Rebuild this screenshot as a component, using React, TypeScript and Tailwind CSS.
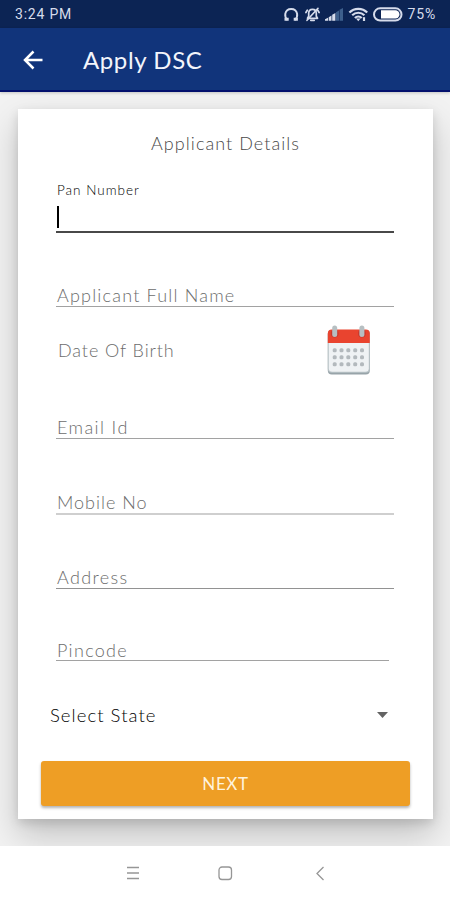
import React from 'react';

interface Field {
    id: number;
    label: string;
    row: string; // Height of the row, the underline sits at its bottom
    text: string;
}

const NAME_FIELD: Field = { id: 1, label: "Applicant Full Name", row: "h-[74px] w-[338px] border-b border-[#a2a2a2]", text: "leading-[21px] tracking-[1.2px]" };

const FIELDS: Field[] = [
    { id: 2, label: "Email Id", row: "h-[61px] w-[338px] border-b border-[#a2a2a2]", text: "leading-[21px] tracking-[1.4px]" },
    { id: 3, label: "Mobile No", row: "h-[76px] w-[338px] border-b-2 border-[#cfcfcf]", text: "leading-[21px] tracking-[1px]" },
    { id: 4, label: "Address", row: "h-[74px] w-[338px] border-b border-[#929292]", text: "leading-[21px] tracking-[1.35px]" },
    { id: 5, label: "Pincode", row: "h-[72px] w-[333px] border-b border-[#a2a2a2]", text: "leading-[19px] tracking-[1.3px]" }
];

const FormField: React.FC<{ field: Field }> = ({ field }) => (
    <div className={`ml-[38px] flex shrink-0 items-end pl-px ${field.row}`}>
        <span className={`text-[18px] font-light whitespace-nowrap text-[#6c6c6c] ${field.text}`}>
            {field.label}
        </span>
    </div>
);

const StatusIcons: React.FC = () => (
    <svg width="122" height="20" viewBox="0 0 122 20" fill="none" className="shrink-0">
        {/* Headphones */}
        <g stroke="#d6dceb">
            <path d="M4.500 16C2.700 14.200 1.800 12.300 2.300 9.800C2.900 6.700 5.200 5 8.200 5S13.500 6.700 14.100 9.800C14.600 12.300 13.700 14.200 11.900 16" strokeWidth="1.900" />
            <path d="M1.500 15.300H5.700M10.700 15.300H14.900" strokeWidth="3" />
        </g>
        {/* Muted bell */}
        <g stroke="#d6dceb" strokeWidth="1.700" strokeLinecap="round" strokeLinejoin="round">
            <path d="M24.500 14.300H34.500L33.300 12.300V9.300C33.300 6.700 31.700 5.300 29.500 5.300S25.700 6.700 25.700 9.300V12.300Z" />
            <path d="M27.800 16.300H31.200M35 4.300L24 16.300M24.300 6.200L22.900 8.500M34.700 6.200L36.100 8.500" />
        </g>
        {/* Signal bars */}
        <g fill="#d6dceb">
            <path d="M42 16.800V15.300L45 13.700V16.800ZM45.700 16.800V13.200L48.500 11.600V16.800ZM49.200 16.800V10.800L52.400 9V16.800Z" />
            <path d="M53 16.800V8.300L56 6.600V16.800ZM56.600 16.800V5.800L60 4V16.800Z" fill="#3d5f8c" />
        </g>
        {/* Wifi */}
        <g stroke="#d6dceb" strokeWidth="2.200">
            <path d="M66.400 8.600C71.300 3.600 79.300 3.600 84.200 8.600" />
            <path d="M69.200 11.300C72.700 7.900 77.900 7.900 81.400 11.300" />
            <path d="M71.900 14C73.900 12 76.700 12 78.700 14" />
        </g>
        <path d="M73 14.600H77.600L75.300 17.300Z" fill="#d6dceb" />
        <path d="M81 13.200V17" stroke="#d6dceb" strokeWidth="2.200" />
        {/* Battery */}
        <rect x="91" y="4.300" width="27.500" height="12.200" rx="6.100" stroke="#d6dceb" strokeWidth="2" />
        <path d="M98 6.200H112.300A4.200 4.200 0 0 1 112.300 14.600H98Z" fill="#fff" />
    </svg>
);

const CalendarIcon: React.FC = () => {
    const cols = [7.7, 14.500, 21.300, 28.200, 35];
    const rows = [25.300, 32.300, 39.200];

    return (
        <svg width="44" height="50" viewBox="0 0 44 50">
            <rect x="0.800" y="5" width="42" height="44.500" rx="4" fill="#98a4a9" />
            <rect x="0.800" y="5" width="42" height="42.700" rx="4" fill="#b9c3c7" />
            <rect x="1.800" y="5" width="40" height="41.700" rx="3.500" fill="#eff2f4" />
            <path d="M0.800 18V8.500Q0.800 4.500 4.800 4.500H38.800Q42.800 4.500 42.800 8.500V18Z" fill="#e9442f" />
            <circle cx="7.700" cy="8.500" r="3.900" fill="#c83a2e" />
            <circle cx="34.900" cy="8.500" r="3.900" fill="#c83a2e" />
            <rect x="5.200" y="0.500" width="5" height="11.500" rx="2.500" fill="#b7bfc2" />
            <rect x="32.400" y="0.500" width="5" height="11.500" rx="2.500" fill="#b7bfc2" />
            {rows.map((y) => cols.map((x) => (
                <rect key={`${x}-${y}`} x={x - 2} y={y - 2} width="4" height="4" rx="1.500" fill="#b3b9bd" />
            )))}
        </svg>
    );
};

const App: React.FC = () => {
    return (
        <div className="flex h-[900px] w-[450px] flex-col overflow-hidden bg-white font-[Lato,sans-serif] select-none">

            {/* STATUS BAR */}
            <div className="flex h-7 shrink-0 items-center justify-between bg-[#0c2454] pr-[14px] pl-[15px] font-[Roboto,sans-serif] text-[14px] text-[#d6dceb]">
                <span className="pt-px tracking-[0.8px]">3:24 PM</span>
                <div className="flex items-center gap-[3px]">
                    <StatusIcons />
                    <span className="pt-px tracking-[0.8px]">75%</span>
                </div>
            </div>

            {/* APP BAR */}
            <header className="z-10 flex h-16 shrink-0 items-center border-b-2 border-[#03106d] bg-[#11347b] pl-[23px] shadow-[0_1px_3px_rgba(0,0,0,0.2)]">
                <svg width="20" height="20" viewBox="0 0 20 20" fill="none" stroke="#fff" strokeWidth="2.500" className="mt-[2px]">
                    <path d="M19.500 10H2M10.500 1.500L2 10L10.500 18.500" />
                </svg>
                <h1 className="mt-[2px] ml-10 text-[24px] leading-[30px] tracking-[0.6px] text-[#f3f5fb]">Apply DSC</h1>
            </header>

            {/* FORM CARD */}
            <main className="h-[754px] shrink-0 overflow-hidden bg-[#f2f2f2] px-[18px] pt-[17px]">
                <section className="flex h-[710px] w-[415px] flex-col bg-white shadow-[0_16px_32px_rgba(0,0,0,0.2),0_4px_10px_rgba(0,0,0,0.13)]">
                    <h2 className="mt-[22px] h-6 shrink-0 text-center text-[18px] leading-6 font-light tracking-[1.05px] text-[#484848]">
                        Applicant Details
                    </h2>

                    {/* Focused field with its floating label */}
                    <div className="mt-[26px] ml-[38px] flex h-[52px] w-[338px] shrink-0 flex-col justify-between border-b-2 border-[#484848]">
                        <span className="pl-px text-[13.500px] leading-[18px] font-light tracking-[1px] text-black">Pan Number</span>
                        <span className="mb-[3px] ml-px h-[22px] w-[2px] bg-black" />
                    </div>

                    <FormField field={NAME_FIELD} />

                    <div className="flex h-[71px] shrink-0 items-start justify-between pt-[18px] pr-[62px] pl-[40px]">
                        <span className="mt-[13px] text-[18px] leading-6 font-light tracking-[0.9px] text-[#6c6c6c]">Date Of Birth</span>
                        <CalendarIcon />
                    </div>

                    {FIELDS.map((item) => (
                        <FormField key={item.id} field={item} />
                    ))}

                    {/* State dropdown */}
                    <div className="mt-[42px] flex h-6 shrink-0 items-center justify-between pr-[45px] pl-[32px]">
                        <span className="text-[18.500px] leading-6 font-light tracking-[1.05px] text-black">Select State</span>
                        <svg width="11" height="6" viewBox="0 0 11 6" fill="#636363">
                            <path d="M0 0H11L5.500 6Z" />
                        </svg>
                    </div>

                    <button className="mt-[34px] ml-[23px] h-[45px] w-[369px] shrink-0 rounded-[3px] bg-[#ee9e25] pt-px text-[17px] tracking-[0.6px] text-[#fff3dd] shadow-[0_2px_3px_rgba(0,0,0,0.3)]">
                        NEXT
                    </button>
                </section>
            </main>

            {/* SYSTEM NAVIGATION */}
            <nav className="flex h-[54px] shrink-0 items-center justify-center">
                <svg width="200" height="16" viewBox="0 0 200 16" fill="none" stroke="#969696" strokeWidth="1.300">
                    <path d="M2 2.500H14M2 8H14M2 13.500H14" />
                    <rect x="94" y="2" width="12.500" height="12.500" rx="3" />
                    <path d="M198.500 2L192 8.500L198.500 15" />
                </svg>
            </nav>
        </div>
    );
};

export default App;
